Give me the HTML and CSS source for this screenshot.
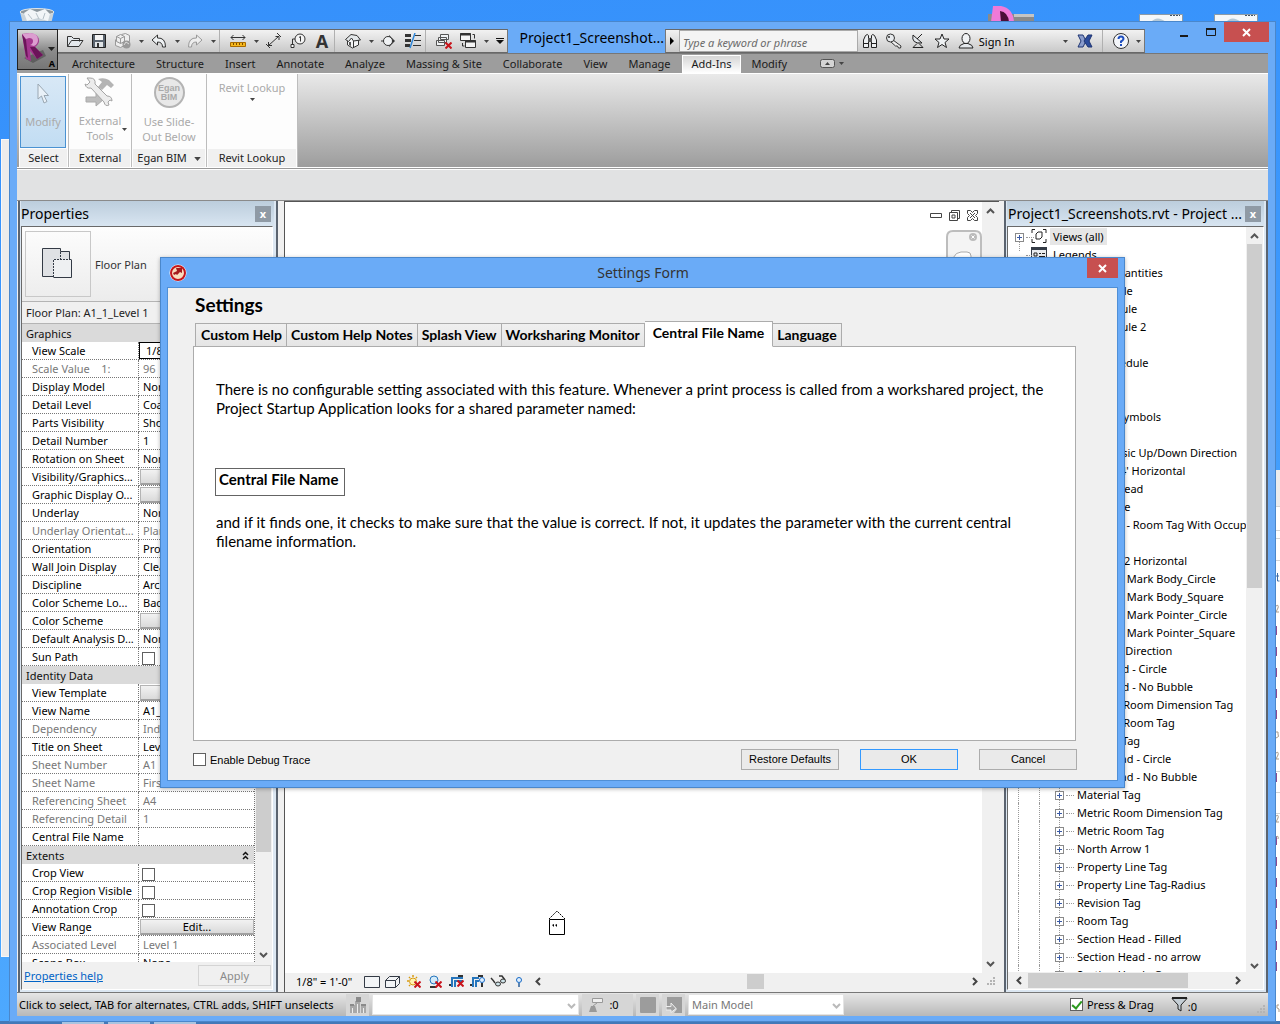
FILE: index.html
```html
<!DOCTYPE html>
<html lang="en">
<head>
  <meta charset="UTF-8">
  <title>Project1_Screenshots.rvt</title>
  <link rel="stylesheet" href="styles.css">
</head>
<body>

  <!-- shared shapes -->
  <svg class="defs" width="0" height="0">
    <symbol id="caret" viewBox="0 0 5 3"><path d="M0 0h5L2.500 3z" fill="#444"/></symbol>
    <symbol id="up" viewBox="0 0 9 6"><path d="M1 5l3.500-3.500L8 5" fill="none" stroke="#555" stroke-width="2"/></symbol>
    <symbol id="down" viewBox="0 0 9 6"><path d="M1 1l3.500 3.500L8 1" fill="none" stroke="#555" stroke-width="2"/></symbol>
    <symbol id="left" viewBox="0 0 6 9"><path d="M5 1L1.500 4.500 5 8" fill="none" stroke="#444" stroke-width="2"/></symbol>
    <symbol id="right" viewBox="0 0 6 9"><path d="M1 1l3.500 3.500L1 8" fill="none" stroke="#444" stroke-width="2"/></symbol>
    <symbol id="cross" viewBox="0 0 9 9"><path d="M1 1l7 7M8 1L1 8" fill="none" stroke="#fff" stroke-width="2"/></symbol>
    <symbol id="redx" viewBox="0 0 7 7"><path d="M0.500 0.500l6 6M6.500 0.500l-6 6" fill="none" stroke="#c8141c" stroke-width="2"/></symbol>
    <symbol id="grip" viewBox="0 0 9 9"><path d="M6 0h2v2H6zM3 3h2v2H3zM6 3h2v2H6zM0 6h2v2H0zM3 6h2v2H3zM6 6h2v2H6z" fill="#b4b4b4"/></symbol>
  </svg>

  <!-- desktop behind the windows -->
  <div class="desk-icons">
    <svg class="bin" width="38" height="24" viewBox="0 0 38 24"><path d="M2 4l5 20h24l5-20z" fill="#c9d3da"/><ellipse cx="19" cy="4" rx="17" ry="3.500" fill="#8d979d" stroke="#dfe6ea"/><path d="M6 5l6-4 7 3 8-3 5 5-2 7-10-3-11 3z" fill="#f2f5f7"/><path d="M10 6l4 5M18 5l3 6M27 5l-2 6" stroke="#b4bfc6"/></svg>
    <svg class="revit" width="48" height="16" viewBox="0 0 48 16"><path d="M0 8h46v8H0z" fill="#8a8a8a"/><path d="M26 8h20v3H26z" fill="#c4c4c4"/><path d="M5 0h8q12 2 13 16H3z" fill="#f07ad8"/><path d="M12 5q8 1 9 11h-8z" fill="#4b0f38"/></svg>
    <svg class="file" width="44" height="8" viewBox="0 0 44 8"><path d="M0.500 0.500h43V8H.5z" fill="#f4f7f9" stroke="#8c9aa5"/><path d="M12 8q6-7 15 0" fill="#b4c8d6"/><path d="M31 1.500h10" stroke="#456" stroke-dasharray="2 1"/></svg>
    <svg class="file" width="44" height="8" viewBox="0 0 44 8"><path d="M0.500 0.500h43V8H.5z" fill="#f4f7f9" stroke="#8c9aa5"/><path d="M12 8q6-7 15 0" fill="#b4c8d6"/><path d="M31 1.500h10" stroke="#456" stroke-dasharray="2 1"/></svg>
  </div>
  <div class="behind-left"></div>
  <div class="behind-right">
    <svg width="4" height="550" viewBox="0 0 4 550">
      <path d="M0 .5h4M0 24.500h4M0 32.500h4M0 54.500h4M0 265.500h4M0 286.500h4M0 307.500h4" stroke="#d4d4d4"/>
      <path d="M0.500 120v9M.5 141v9M.5 162v9M.5 183v9M.5 204v9M.5 267v9M.5 330v9M.5 351v9M.5 372v9M.5 393v9M.5 414v9M.5 435v9M.5 456v9" stroke="#8a4b94"/>
      <path d="M0 70h3M1.500 67v8h2" fill="none" stroke="#3f6ea8"/>
      <path d="M0 100q3-2 2 2l-2 4h3M0 226q3-1 2 2 2 3-2 4M0 247q3-2 2 2l-2 4h3M0 310q3-2 2 2l-2 4h3M0 331q3-2 2 2M3 499h-2v3q3 0 2 4" fill="none" stroke="#a99a88"/>
    </svg>
  </div>
  <div class="taskbar"><span></span><span></span><span></span></div>

  <div class="window main-window">
    <header class="titlebar">
      <button class="app-btn" aria-label="Application menu">
        <svg width="40" height="40" viewBox="0 0 40 40">
          <path d="M6 28l9 5 13-7-3-6z" fill="#3d3d3d" opacity=".5"/>
          <path d="M4 4l8-1q9 1 9 8 0 3-4 6l8 8-6 4-7-8 1 10-5-2z" fill="#a4368f"/>
          <path d="M4 4l8-1q8 0 8 7 0 4-4 6l-4-1q3-1 3-4 0-3-4-3l-3 1z" fill="#dc9dd0"/>
          <path d="M12 17l7 12 6-4-8-8zM4 4l4 22 2 2-2-18z" fill="#6b1459"/>
          <path d="M30 17h7l-3.500 4z" fill="#222"/>
        </svg>
        <span>A</span>
      </button>
      <nav class="qat">
        <button aria-label="Open"><svg width="18" height="16" viewBox="0 0 18 16"><path d="M1.500 13.500v-10h4l2 2h6v3M1.500 13.500l4-6H17l-4 6z" fill="#e4e8ec" stroke="#333"/></svg></button>
        <button aria-label="Save"><svg width="16" height="16" viewBox="0 0 16 16"><path d="M1.500 1.500h13v13h-13z" fill="#59636e" stroke="#222"/><path d="M4 2h8v5H4z" fill="#f4f4f4"/><path d="M4 9h8v5H4z" fill="#dfe3e6"/><path d="M6 10h2v4H6z" fill="#333"/></svg></button>
        <button aria-label="Synchronize"><svg width="18" height="18" viewBox="0 0 18 18"><path d="M2.500 4.500l4-2 4 2v5l-4 2-4-2zM7.500 2.500l4-1 4 2v6l-4 2M1.500 7.500v6l5 2 4-2" fill="#eee" stroke="#999"/><path d="M2.500 4.500l4 2 4-2M6.500 6.500v5" fill="none" stroke="#999"/><circle cx="12.500" cy="12.500" r="4" fill="#999"/><path d="M10 13l2-3 3 2" fill="none" stroke="#ddd"/></svg></button>
        <button class="drop" aria-label="Synchronize options"><svg width="5" height="3"><use href="#caret"/></svg></button>
        <button aria-label="Undo"><svg width="16" height="14" viewBox="0 0 16 14"><path d="M1 6l5.500-5v3q8-.500 8 9h-3q0-5-5-5v3z" fill="#eef1f3" stroke="#333"/></svg></button>
        <button class="drop" aria-label="Undo list"><svg width="5" height="3"><use href="#caret"/></svg></button>
        <button aria-label="Redo"><svg width="16" height="14" viewBox="0 0 16 14"><path d="M15 6L9.500 1v3q-8-.500-8 9h3q0-5 5-5v3z" fill="#eee" stroke="#999"/></svg></button>
        <button class="drop" aria-label="Redo list"><svg width="5" height="3"><use href="#caret"/></svg></button>
        <i></i>
        <button aria-label="Measure"><svg width="16" height="14" viewBox="0 0 16 14"><path d="M1 3.500h14M3.500 1L1 3.500 3.500 6M12.500 1L15 3.500 12.500 6" fill="none" stroke="#333"/><path d="M.5 8.500h15v4H.5z" fill="#f6b81e" stroke="#a86b00"/><path d="M3.500 9v2M6.500 9v2M9.500 9v2M12.500 9v2" stroke="#7a4b00"/></svg></button>
        <button class="drop" aria-label="Measure options"><svg width="5" height="3"><use href="#caret"/></svg></button>
        <button aria-label="Aligned dimension"><svg width="18" height="16" viewBox="0 0 18 16"><path d="M3.500 12.500l10-9M3.500 9v3.500H7M10.500 3.500H14V7M1 11l4 4M12 0l4 4" fill="none" stroke="#333"/></svg></button>
        <button aria-label="Tag"><svg width="16" height="16" viewBox="0 0 16 16"><circle cx="10" cy="6" r="5" fill="#f4f4f4" stroke="#333"/><path d="M9 4.500l1.500-1v5M5 6H2.500v6" fill="none" stroke="#333"/><path d="M1 11.500h3v3H1z" fill="#fff" stroke="#333"/></svg></button>
        <button class="text-tool" aria-label="Text">A</button>
        <i></i>
        <button aria-label="Default 3D view"><svg width="16" height="16" viewBox="0 0 16 16"><path d="M2.500 6v6l5 3 6-3V6" fill="#f4f5f6" stroke="#333"/><path d="M.5 6.500L6 1.500l6 1 3.500 4.500-7 1-2-3-3 3.500z" fill="#e4e8ea" stroke="#333"/><path d="M8.500 8v6" stroke="#333"/><path d="M4 9h2v4l-2-1z" fill="#555"/></svg></button>
        <button class="drop" aria-label="3D options"><svg width="5" height="3"><use href="#caret"/></svg></button>
        <button aria-label="Section"><svg width="16" height="14" viewBox="0 0 16 14"><path d="M8 1l6 6-6 6z" fill="#333"/><circle cx="7" cy="7" r="4.500" fill="#f0f2f4" stroke="#333"/><path d="M0 7h3" stroke="#333"/></svg></button>
        <button aria-label="Thin lines"><svg width="18" height="16" viewBox="0 0 18 16"><path d="M1 2.500h6M1 7.500h6M1 12.500h5" stroke="#333" stroke-width="3"/><path d="M11 2.500h6M10 7.500h7M9 12.500h8" stroke="#333"/><path d="M11 0L6 15" stroke="#2f86d8" stroke-width="1.500"/></svg></button>
        <i></i>
        <button aria-label="Close hidden windows"><svg width="16" height="16" viewBox="0 0 16 16"><path d="M4.500 1.500h8v5h-8zM2.500 4.500h8v5h-8zM.5 7.500h8v5h-8z" fill="#f0f2f4" stroke="#555"/><use href="#redx" x="9" y="9" width="7" height="7"/></svg></button>
        <button aria-label="Switch windows"><svg width="18" height="18" viewBox="0 0 18 18"><path d="M1.500 1.500h10v7h-10zM6.500 8.500h10v7h-10z" fill="#f4f4f4" stroke="#333"/><path d="M1 2.500h11M6 9.500h11" stroke="#333" stroke-width="2"/><path d="M13.500 2.500h2v4M3.500 11v3h2" fill="none" stroke="#333"/></svg></button>
        <button class="drop" aria-label="Window list"><svg width="5" height="3"><use href="#caret"/></svg></button>
        <button class="drop more" aria-label="Customize toolbar"><svg width="8" height="6" viewBox="0 0 8 6"><path d="M0 0h8v1H0zM0 2h8L4 6z" fill="#111"/></svg></button>
      </nav>
      <span class="doc-title">Project1_Screenshot...</span>
      <div class="infocenter">
        <button class="expand" aria-label="Collapse search"><svg width="4" height="8" viewBox="0 0 4 8"><path d="M0 0l4 4-4 4z" fill="#000"/></svg></button>
        <input type="text" aria-label="Search" placeholder="Type a keyword or phrase">
        <button aria-label="Search"><svg width="16" height="16" viewBox="0 0 16 16"><path d="M3.500 2.500q2-2 3 0v12h-5V7zM12.500 2.500q-2-2-3 0v12h5V7z" fill="#eef0f2" stroke="#222"/><path d="M6 5h4v4H6z" fill="#555"/><path d="M1.500 10.500h5M9.500 10.500h5" stroke="#222"/></svg></button>
        <button aria-label="Subscription"><svg width="18" height="16" viewBox="0 0 18 16"><path d="M8 7l8 6-.500 2h-2l-1-2-2 0-5-4.500" fill="#eee" stroke="#333"/><circle cx="5.500" cy="5" r="4" fill="#e8ebee" stroke="#333"/><circle cx="4" cy="4" r="1" fill="#333"/></svg></button>
        <button aria-label="Communication"><svg width="16" height="16" viewBox="0 0 16 16"><path d="M3 2q-2 9 9 8z" fill="#e4e8ec" stroke="#222"/><path d="M7 6l5-5M7 10.500l-4 4h10l-4-4" fill="none" stroke="#222"/></svg></button>
        <button aria-label="Favorites"><svg width="16" height="16" viewBox="0 0 16 16"><path d="M8 1l2 5h5l-4 3.500 1.500 5L8 11.500l-4.500 3 1.500-5L1 6h5z" fill="#eef1f3" stroke="#222"/></svg></button>
        <button class="sign-in"><svg width="16" height="16" viewBox="0 0 16 16"><path d="M1 15q0-3 5-4.500h4q5 1.500 5 4.500z" fill="#e4e8ec" stroke="#222"/><ellipse cx="8" cy="5.500" rx="4" ry="5" fill="#f0f2f4" stroke="#222"/></svg>Sign In<svg class="end" width="5" height="3"><use href="#caret"/></svg></button>
        <button aria-label="Exchange apps"><svg width="16" height="14" viewBox="0 0 16 14"><path d="M1 1h5l3 6-3 6H1l3-6z" fill="#8a9ccc" stroke="#1f3572"/><path d="M15 1h-4L7 7l4 6h4l-3-6z" fill="#2c4c9c" stroke="#1f3572"/></svg></button>
        <i></i>
        <button aria-label="Help"><svg width="18" height="18" viewBox="0 0 18 18"><circle cx="9" cy="9" r="7.500" fill="#f4f6fa" stroke="#333"/><path d="M6.500 7q0-2.500 2.500-2.500T11.500 7Q11 8.500 9 9.500V11M9 12v2" fill="none" stroke="#1f4fbf" stroke-width="2"/></svg></button>
        <button class="drop" aria-label="Help options"><svg width="5" height="3"><use href="#caret"/></svg></button>
      </div>
      <div class="win-btns">
        <button aria-label="Minimize"><svg width="10" height="12" viewBox="0 0 10 12"><path d="M1 9h8v2H1z" fill="#1a1a1a"/></svg></button>
        <button aria-label="Maximize"><svg width="10" height="8" viewBox="0 0 10 8"><path d="M0.500 1h9v6.500h-9z" fill="none" stroke="#1a1a1a"/><path d="M0 1h10" stroke="#1a1a1a" stroke-width="2"/></svg></button>
        <button class="close" aria-label="Close"><svg width="9" height="9"><use href="#cross"/></svg></button>
      </div>
    </header>

    <nav class="ribbon-tabs">
      <a href="#">Architecture</a><a href="#">Structure</a><a href="#">Insert</a><a href="#">Annotate</a><a href="#">Analyze</a><a href="#">Massing &amp; Site</a><a href="#">Collaborate</a><a href="#">View</a><a href="#">Manage</a><a href="#" class="active">Add-Ins</a><a href="#">Modify</a>
      <button aria-label="Minimize ribbon"><svg width="24" height="9" viewBox="0 0 24 9"><rect x=".5" y=".5" width="14" height="8" rx="2" fill="#d4d4d4" stroke="#555"/><path d="M5 6l2.500-3L10 6z" fill="#444"/><path d="M19 3h5l-2.500 3z" fill="#444"/></svg></button>
    </nav>

    <div class="ribbon">
      <section class="panel select">
        <button class="tool on"><svg width="14" height="22" viewBox="0 0 14 22"><path d="M2 1v15l3.500-3L8 20l3-1.500-3-6h4.500z" fill="#e9f1f8" stroke="#9aa7b2"/></svg>Modify</button>
        <h3>Select</h3>
      </section>
      <section class="panel external">
        <button class="tool"><svg width="32" height="30" viewBox="0 0 32 30"><path d="M2 20h10v-4l8 6-8 7v-4H2z" fill="#bdbdbd" stroke="#aaa"/><path d="M14 2q6-2 11 1l5 5-3 3-4-3-5 5-4-3 4-5z" fill="#b4b4b4"/><path d="M3 1l3 4-3 3-2-1q1 5 6 4l13 14q1 5 5 3l-1-3 2-2 2 1q0-5-5-5L11 7q1-6-5-6z" fill="#ececec" stroke="#a4a4a4"/></svg><span>External<br>Tools</span><svg class="side" width="5" height="3"><use href="#caret"/></svg></button>
        <h3>External</h3>
      </section>
      <section class="panel egan">
        <button class="tool"><span class="badge">Egan<br>BIM</span><span>Use Slide-<br>Out Below</span></button>
        <h3>Egan BIM <svg width="7" height="4" viewBox="0 0 5 3"><use href="#caret"/></svg></h3>
      </section>
      <section class="panel lookup">
        <button class="tool">Revit Lookup<svg class="below" width="5" height="3"><use href="#caret"/></svg></button>
        <h3>Revit Lookup</h3>
      </section>
    </div>
    <div class="options-bar"></div>

    <main class="workspace">
      <aside class="dock properties">
        <header><h2>Properties</h2><button aria-label="Close properties">x</button></header>
        <div class="dock-body">
          <div class="type-selector">
            <div class="thumb"><svg width="34" height="34" viewBox="0 0 34 34"><path d="M2 2h18v2h9v10h-1v15H2z" fill="#dfe1e4"/><path d="M13.500 29.500h-12v-28h18v3h9v8" fill="none" stroke="#333a45"/><path d="M12.500 12.500h18v18h-18z" fill="#eef0f2" stroke="none"/><path d="M30.500 12.500v18h-18" fill="none" stroke="#333a45"/><path d="M19.500 2v10.500M12.500 30V12.500h18" fill="none" stroke="#333a45" stroke-dasharray="2 1"/></svg></div>
            <span>Floor Plan</span>
          </div>
          <div class="filter">Floor Plan: A1_1_Level 1</div>
          <div class="grid-scroll">
            <div class="grid-clip">
              <table>
                <colgroup><col class="name"><col></colgroup>
                <tr class="group"><th colspan="2">Graphics</th></tr>
                <tr><td>View Scale</td><td><span class="edit">1/8" = 1'-0"</span></td></tr>
                <tr class="off"><td>Scale Value &nbsp;&nbsp; 1:</td><td>96</td></tr>
                <tr><td>Display Model</td><td>Normal</td></tr>
                <tr><td>Detail Level</td><td>Coarse</td></tr>
                <tr><td>Parts Visibility</td><td>Show Original</td></tr>
                <tr><td>Detail Number</td><td>1</td></tr>
                <tr><td>Rotation on Sheet</td><td>None</td></tr>
                <tr><td>Visibility/Graphics...</td><td><button>Edit...</button></td></tr>
                <tr><td>Graphic Display O...</td><td><button>Edit...</button></td></tr>
                <tr><td>Underlay</td><td>None</td></tr>
                <tr class="off"><td>Underlay Orientat...</td><td>Plan</td></tr>
                <tr><td>Orientation</td><td>Project North</td></tr>
                <tr><td>Wall Join Display</td><td>Clean all wall joins</td></tr>
                <tr><td>Discipline</td><td>Architectural</td></tr>
                <tr><td>Color Scheme Lo...</td><td>Background</td></tr>
                <tr><td>Color Scheme</td><td><button>&lt;none&gt;</button></td></tr>
                <tr><td>Default Analysis D...</td><td>None</td></tr>
                <tr><td><label for="sun">Sun Path</label></td><td><input type="checkbox" id="sun"></td></tr>
                <tr class="group"><th colspan="2">Identity Data</th></tr>
                <tr><td>View Template</td><td><button>&lt;None&gt;</button></td></tr>
                <tr><td>View Name</td><td>A1_1_Level 1</td></tr>
                <tr class="off"><td>Dependency</td><td>Independent</td></tr>
                <tr><td>Title on Sheet</td><td>Level 1</td></tr>
                <tr class="off"><td>Sheet Number</td><td>A1</td></tr>
                <tr class="off"><td>Sheet Name</td><td>First Floor</td></tr>
                <tr class="off"><td>Referencing Sheet</td><td>A4</td></tr>
                <tr class="off"><td>Referencing Detail</td><td>1</td></tr>
                <tr><td>Central File Name</td><td></td></tr>
                <tr class="group"><th colspan="2">Extents <svg width="7" height="9" viewBox="0 0 7 9"><path d="M1 4l2.500-2.500L6 4M1 8l2.500-2.500L6 8" fill="none" stroke="#111" stroke-width="1.500"/></svg></th></tr>
                <tr><td><label for="crop">Crop View</label></td><td><input type="checkbox" id="crop"></td></tr>
                <tr><td><label for="cropvis">Crop Region Visible</label></td><td><input type="checkbox" id="cropvis"></td></tr>
                <tr><td><label for="anno">Annotation Crop</label></td><td><input type="checkbox" id="anno"></td></tr>
                <tr><td>View Range</td><td><button>Edit...</button></td></tr>
                <tr class="off"><td>Associated Level</td><td>Level 1</td></tr>
                <tr><td>Scope Box</td><td>None</td></tr>
              </table>
            </div>
            <div class="vscroll"><span></span><svg width="9" height="6"><use href="#down"/></svg></div>
          </div>
          <footer><a href="#">Properties help</a><button disabled>Apply</button></footer>
        </div>
      </aside>

      <section class="view">
        <div class="canvas">
          <div class="sheet">
            <div class="mdi">
              <svg width="12" height="5" viewBox="0 0 12 5"><path d="M.5 .5h11v4H.5z" fill="#fff" stroke="#444"/></svg>
              <svg width="11" height="11" viewBox="0 0 11 11"><path d="M2.500 .5h8v8h-8z" fill="#fff" stroke="#444"/><path d="M.5 2.500h8v8h-8z" fill="#fff" stroke="#444"/><path d="M3 5h3v3H3z" fill="none" stroke="#444"/></svg>
              <svg width="11" height="11" viewBox="0 0 11 11"><path d="M.5 .5h3l2 2 2-2h3v3l-2 2 2 2v3h-3l-2-2-2 2h-3v-3l2-2-2-2z" fill="#fff" stroke="#444"/><path d="M3 3l5 5M8 3L3 8" stroke="#444"/></svg>
            </div>
            <div class="navbar"><svg width="36" height="50" viewBox="0 0 36 50"><path d="M1 50V7q0-6 6-6h22q6 0 6 6v43" fill="#f4f4f4" stroke="#bdbdbd" stroke-width="2"/><circle cx="27" cy="7" r="4" fill="#bbb"/><path d="M25.500 5.500l3 3M28.500 5.500l-3 3" stroke="#fff"/><path d="M7 28q3-6 8-6h6q4 0 4 4v3" fill="#fff" stroke="#aaa"/></svg></div>
            <svg class="elevation" width="18" height="26" viewBox="0 0 18 26"><path d="M1 9l8-8 8 8" fill="none" stroke="#000" stroke-dasharray="2 1"/><path d="M1.500 9.500h15v15h-15z" fill="#fff" stroke="#000"/><path d="M4 15l2-1v3zM7 15l2-1v3z" fill="#000"/></svg>
          </div>
          <div class="vscroll bare"><svg width="9" height="6"><use href="#up"/></svg><svg width="9" height="6"><use href="#down"/></svg></div>
        </div>
        <div class="viewbar">
          <span>1/8" = 1'-0"</span>
          <svg width="17" height="16" viewBox="0 0 17 16"><path d="M.5 2.500h15v11H.5z" fill="#f2f4f6" stroke="#333a45"/></svg>
          <svg width="17" height="16" viewBox="0 0 17 16"><path d="M.5 6.500h10v7H.5zM.5 6.500l4-4h10l-4 4M14.500 2.500v7l-4 4" fill="#f2f4f6" stroke="#333a45"/></svg>
          <svg width="17" height="16" viewBox="0 0 17 16"><circle cx="7" cy="7.500" r="3.500" fill="#fff3b0" stroke="#d89a10"/><path d="M7 1v2M1 7h2M3 3l1 1M11 3l-1 1M3 12l1-1" stroke="#d89a10" stroke-width="1.500"/><use href="#redx" x="8" y="7" width="7" height="7"/></svg>
          <svg width="17" height="16" viewBox="0 0 17 16"><circle cx="7" cy="6" r="4" fill="#d4ebfa" stroke="#2676bd"/><path d="M3 13h6" stroke="#333" stroke-width="2"/><use href="#redx" x="8" y="7" width="7" height="7"/></svg>
          <svg width="17" height="16" viewBox="0 0 17 16"><path d="M4 13V4h11M7 13V7h8" fill="none" stroke="#2676bd" stroke-width="2"/><path d="M1 11h2M10 2h5" stroke="#333" stroke-width="2"/><use href="#redx" x="9" y="6" width="7" height="7"/></svg>
          <svg width="17" height="16" viewBox="0 0 17 16"><path d="M4 13V4h6M7 13V7h3" fill="none" stroke="#2676bd" stroke-width="2"/><path d="M1 11h2M9 2h5" stroke="#333" stroke-width="2"/><circle cx="13" cy="6" r="2.500" fill="#dff0ff" stroke="#1668c4"/><path d="M13 9v4" stroke="#333" stroke-width="2"/></svg>
          <svg width="17" height="16" viewBox="0 0 17 16"><path d="M1 4q2 2 4 5M9 2l3 0 3 4" fill="none" stroke="#333" stroke-width="1.500"/><ellipse cx="8" cy="10" rx="2.500" ry="2" fill="#cfe4ea" stroke="#333"/><ellipse cx="13" cy="7" rx="2.500" ry="2" fill="#cfe4ea" stroke="#333"/></svg>
          <svg width="17" height="16" viewBox="0 0 17 16"><circle cx="8" cy="6" r="2.500" fill="#dff0ff" stroke="#1668c4"/><path d="M8 9v4" stroke="#5a83b0" stroke-width="2"/></svg>
          <div class="hscroll"><svg width="6" height="9"><use href="#left"/></svg><span></span><svg width="6" height="9"><use href="#right"/></svg></div>
          <svg class="corner" width="9" height="9"><use href="#grip"/></svg>
        </div>
      </section>

      <aside class="dock browser">
        <header><h2>Project1_Screenshots.rvt - Project ...</h2><button aria-label="Close browser">x</button></header>
        <div class="dock-body">
          <div class="tree-scroll">
            <ul class="tree">
              <li class="root"><b></b><svg width="16" height="14" viewBox="0 0 16 14"><path d="M1 4V.5h3M12 .5h3V4M1 10v3.500h3M12 13.500h3V10" fill="none" stroke="#222"/><path d="M5 5l2-2h4v5l-2 2H5z" fill="#fff" stroke="#222"/></svg><span class="sel">Views (all)</span></li>
              <li class="root"><b class="none"></b><svg width="16" height="14" viewBox="0 0 16 14"><path d="M.5 .5h15v13H.5z" fill="#e9ecef" stroke="#333a45"/><path d="M0 1.500h16" stroke="#333a45" stroke-width="3"/><path d="M3 6h3v3H3zM8 6.500h2M11 6.500h3M8 9.500h6" fill="none" stroke="#222"/></svg><span>Legends</span></li>
              <li class="root"><b></b><i></i><span>Schedules/Quantities</span></li>
              <li class="sub">Door Schedule</li>
              <li class="sub">Room Schedule</li>
              <li class="sub">Room Schedule 2</li>
              <li class="sub">Sheet List</li>
              <li class="sub">Window Schedule</li>
              <li class="sub">Sheets</li>
              <li class="sub">Families</li>
              <li class="sub">Annotation Symbols</li>
              <li><b></b>Area Tag</li>
              <li><b></b>Areas Basic Up/Down Direction</li>
              <li><b></b>Break 1/4' Horizontal</li>
              <li><b></b>Callout Head</li>
              <li><b></b>Centerline</li>
              <li><b></b>Custom I - Room Tag With Occupancy</li>
              <li><b></b>Door Tag</li>
              <li><b></b>Drawing-2 Horizontal</li>
              <li><b></b>Elevation Mark Body_Circle</li>
              <li><b></b>Elevation Mark Body_Square</li>
              <li><b></b>Elevation Mark Pointer_Circle</li>
              <li><b></b>Elevation Mark Pointer_Square</li>
              <li><b></b>Graphics Direction</li>
              <li><b></b>Grid Head - Circle</li>
              <li><b></b>Grid Head - No Bubble</li>
              <li><b></b>Imperial Room Dimension Tag</li>
              <li><b></b>Imperial Room Tag</li>
              <li><b></b>Keynote Tag</li>
              <li><b></b>Level Head - Circle</li>
              <li><b></b>Level Head - No Bubble</li>
              <li><b></b>Material Tag</li>
              <li><b></b>Metric Room Dimension Tag</li>
              <li><b></b>Metric Room Tag</li>
              <li><b></b>North Arrow 1</li>
              <li><b></b>Property Line Tag</li>
              <li><b></b>Property Line Tag-Radius</li>
              <li><b></b>Revision Tag</li>
              <li><b></b>Room Tag</li>
              <li><b></b>Section Head - Filled</li>
              <li><b></b>Section Head - no arrow</li>
              <li><b></b>Section Head - Open</li>
            </ul>
            <div class="vscroll"><svg width="9" height="6"><use href="#up"/></svg><span></span><svg width="9" height="6"><use href="#down"/></svg></div>
          </div>
          <div class="hscroll"><svg width="6" height="9"><use href="#left"/></svg><span></span><svg width="6" height="9"><use href="#right"/></svg></div>
        </div>
      </aside>
    </main>

    <footer class="statusbar">
      <p>Click to select, TAB for alternates, CTRL adds, SHIFT unselects</p>
      <span class="cell icon"><svg width="18" height="18" viewBox="0 0 18 18"><path d="M1 9h5v8H1zM6 5h5v12H6zM12 9h5v8h-5z" fill="#a8a8a8"/><path d="M7 1h5v5H7zM1 8h4v2H1zM12 8h5v2h-5z" fill="#8a8a8a"/><path d="M3.500 12v5M8.500 8v9M14.500 12v5" stroke="#eee"/></svg></span>
      <span class="combo wide"><select aria-label="Worksets"><option></option></select><svg width="9" height="6"><use href="#down"/></svg></span>
      <span class="cell count"><svg width="16" height="16" viewBox="0 0 16 16"><path d="M4.500 1.500h10v4h-10zM9 6l-4 3" fill="#eee" stroke="#999"/><path d="M1 15l2-6h4l2 6z" fill="#999"/></svg>:0</span>
      <span class="cell icon"><svg width="16" height="16" viewBox="0 0 16 16"><rect width="16" height="16" rx="1" fill="#9c9c9c"/></svg></span>
      <span class="cell icon"><svg width="16" height="16" viewBox="0 0 16 16"><path d="M1 0h15v16H8l3-4-5-5v3H1z" fill="#9c9c9c"/><path d="M0 9.500h5V6l5 5.500-5 4V13H0z" fill="#a4a4a4" stroke="#eee"/></svg></span>
      <span class="combo"><select aria-label="Design option"><option>Main Model</option></select><svg width="9" height="6"><use href="#down"/></svg></span>
      <div class="status-right">
        <label><input type="checkbox" checked>Press &amp; Drag</label>
        <span class="filter-count"><svg width="17" height="16" viewBox="0 0 17 16"><path d="M1 1.500h15L10 8v6l-3-2V8z" fill="#c5ced5" stroke="#222"/><path d="M1 1h15" stroke="#222" stroke-width="2"/></svg><span>:0</span></span>
        <svg class="corner" width="9" height="9"><use href="#grip"/></svg>
      </div>
    </footer>
  </div>

  <div class="window dialog" role="dialog" aria-label="Settings Form">
    <header class="dialog-title">
      <svg width="18" height="18" viewBox="0 0 18 18"><circle cx="9" cy="9" r="8.500" fill="#fff"/><circle cx="9" cy="9" r="7" fill="#f9dcbc" stroke="#c4161c" stroke-width="2"/><path d="M7 4h6v5l-2-1-3 3-1-1-2 1-1-2 4-2z" fill="#a51a1c"/></svg>
      <span>Settings Form</span>
      <button class="close" aria-label="Close"><svg width="9" height="9"><use href="#cross"/></svg></button>
    </header>
    <form class="dialog-body">
      <h1>Settings</h1>
      <div class="tabs" role="tablist">
        <button type="button" role="tab">Custom Help</button><button type="button" role="tab">Custom Help Notes</button><button type="button" role="tab">Splash View</button><button type="button" role="tab">Worksharing Monitor</button><button type="button" role="tab" class="active">Central File Name</button><button type="button" role="tab">Language</button>
      </div>
      <div class="tab-page">
        <p>There is no configurable setting associated with this feature. Whenever a print process is called from a workshared project, the<br>Project Startup Application looks for a shared parameter named:</p>
        <input type="text" aria-label="Parameter name" value="Central File Name" readonly>
        <p>and if it finds one, it checks to make sure that the value is correct. If not, it updates the parameter with the current central<br>filename information.</p>
      </div>
      <div class="dialog-foot">
        <label><input type="checkbox">Enable Debug Trace</label>
        <button type="button">Restore Defaults</button>
        <button type="button" class="default">OK</button>
        <button type="button">Cancel</button>
      </div>
    </form>
  </div>

</body>
</html>
```
FILE: styles.css
```css
* { box-sizing: border-box; }
body {
  margin: 0;
  height: 100vh;
  overflow: hidden;
  position: relative;
  background: linear-gradient(170deg, #3590fb, #3c98fd 40%, #55b0ff);
  font-family: "Noto Sans", "Open Sans", sans-serif;
  font-size: 11px;
  color: #000;
}
button, input, select {
  font: inherit;
  color: inherit;
  margin: 0;
  padding: 0;
}
button { border: none; background: none; }
h1, h2, h3, p, ul { margin: 0; padding: 0; font-weight: normal; }
svg { display: block; flex: none; }
.defs { position: absolute; }
input[type="checkbox"] {
  appearance: none;
  width: 13px;
  height: 13px;
  background: #fff;
  border: 1px solid #606060;
  flex: none;
}

/* desktop */
.desk-icons {
  display: flex;
  align-items: flex-end;
  height: 22px;
  overflow: hidden;
  padding: 0 22px 0 18px;
}
.desk-icons .bin { margin-bottom: -10px; margin-right: auto; }
.desk-icons .revit { margin-right: 103px; }
.desk-icons .file + .file { margin-left: 31px; }
.behind-left, .behind-right {
  position: absolute;
  background: #ececec;
}
.behind-left { left: 1px; width: 10px; top: 139px; bottom: 67px; border: 1px solid #f8f8f8; }
.behind-right { right: 0; width: 4px; top: 470px; bottom: 2px; background: #fff; border-top: 36px solid #ececec; }
.taskbar {
  position: absolute;
  left: 0;
  right: 0;
  bottom: 0;
  height: 3px;
  padding: 1px 0 0 62px;
  display: flex;
  gap: 4px;
  background: #4379b8;
}
.taskbar span { width: 42px; background: #a9c4e0; }

.window {
  position: absolute;
  background: #6aabf7;
  border: 1px solid #4a87cb;
}
.main-window {
  left: 9px;
  right: 4px;
  top: 21px;
  bottom: 2px;
  padding: 0 7px 5px;
  display: flex;
  flex-direction: column;
}

/* title bar */
.titlebar {
  height: 31px;
  flex: none;
  display: flex;
  align-items: flex-end;
  position: relative;
}
.app-btn {
  position: absolute;
  left: 0;
  top: 7px;
  width: 41px;
  height: 41px;
  border: 1px solid #222;
  background: linear-gradient(#d8d8d8, #8c8c8c 50%, #767676);
  z-index: 2;
}
.app-btn span {
  position: absolute;
  right: 2px;
  bottom: 0;
  font-size: 9px;
  font-weight: bold;
  line-height: 10px;
}
.qat, .infocenter {
  height: 24px;
  display: flex;
  align-items: center;
  background: linear-gradient(#f2f2f2, #c9c9c9);
  border-top: 1px solid #686868;
  border-bottom: 1px solid #686868;
}
.qat { margin-left: 41px; padding-left: 5px; border-right: 1px solid #777; }
.qat button, .infocenter button {
  width: 24px;
  height: 22px;
  display: flex;
  align-items: center;
  justify-content: center;
}
.qat .drop { width: 12px; }
.qat .more { width: 15px; }
.qat i, .infocenter i {
  width: 7px;
  height: 22px;
  border-left: 1px solid #b0b0b0;
}
.qat .text-tool { font-size: 18px; font-weight: bold; color: #333; }
.doc-title {
  flex: 1;
  text-align: right;
  padding-right: 1px;
  font-size: 14px;
  line-height: 30px;
  white-space: nowrap;
}
.infocenter { width: 480px; border-left: 1px solid #777; border-right: 1px solid #777; }
.infocenter .expand { width: 13px; }
.infocenter input {
  width: 180px;
  height: 22px;
  padding: 2px 0 0 3px;
  border: 1px solid #aaa;
  background: #f4f4f4;
}
.infocenter input::placeholder { color: #6a6a6a; font-style: italic; opacity: 1; }
.infocenter .sign-in { width: 120px; justify-content: flex-start; gap: 5px; padding-left: 4px; }
.infocenter .sign-in .end { margin-left: auto; margin-right: 5px; }
.infocenter .drop { width: 11px; }
.infocenter i { margin-left: 5px; }
.win-btns { align-self: flex-start; width: 124px; margin-right: -1px; display: flex; justify-content: flex-end; }
.win-btns button { width: 27px; height: 20px; display: flex; align-items: center; justify-content: center; }
.close { background: #c75050; }
.win-btns .close { width: 45px; }

/* ribbon */
.ribbon-tabs {
  height: 20px;
  flex: none;
  display: flex;
  align-items: flex-end;
  padding-left: 45px;
  background: #9d9d9d;
  border-top: 1px solid #777;
}
.ribbon-tabs a {
  padding: 0 11px 0 10px;
  line-height: 17px;
  height: 18px;
  color: #1a1a1a;
  text-decoration: none;
}
.ribbon-tabs .active { background: linear-gradient(#d6d6d6, #fff); border: 1px solid #fff; border-bottom: none; padding: 0 9px; line-height: 16px; }
.ribbon-tabs button { margin: 0 0 5px 22px; }
.ribbon {
  height: 95px;
  flex: none;
  display: flex;
  padding-left: 2px;
  background: linear-gradient(#e9e9e9, #9d9d9d);
  border-top: 1px solid #fff;
  border-bottom: 1px solid #fff;
}
.panel {
  display: flex;
  flex-direction: column;
  background: #fdfdfd;
  border-right: 1px solid #bdbdbd;
  padding: 0 1px;
}
.panel.select { width: 50px; }
.panel.external { width: 63px; }
.panel.egan { width: 75px; }
.panel.lookup { width: 91px; }
.panel h3 {
  height: 18px;
  line-height: 17px;
  font-size: 11px;
  text-align: center;
  background: #f0f0f0;
  color: #222;
}
.panel h3 svg { display: inline-block; margin-left: 4px; vertical-align: 1px; }
.tool {
  flex: 1;
  display: flex;
  flex-direction: column;
  align-items: center;
  position: relative;
  line-height: 15px;
  color: #aaa;
  padding-top: 3px;
}
.tool > svg { margin-bottom: 6px; }
.tool.on {
  border: 1px solid #4a92d2;
  background: linear-gradient(#d8e8f6, #c2ddf3);
  margin: 2px 1px 1px 0;
  padding-top: 6px;
}
.tool.on > svg { margin-bottom: 9px; }
.tool .side { position: absolute; right: 3px; top: 54px; margin: 0; }
.tool .below { margin-top: 3px; }
.panel.lookup .tool { padding-top: 6px; }
.badge {
  width: 31px;
  height: 31px;
  border-radius: 50%;
  border: 2px solid #b4b4b4;
  background: #e8e8e8;
  font: bold 9px "Liberation Sans", sans-serif;
  line-height: 9px;
  padding-top: 5px;
  margin-bottom: 6px;
}
.options-bar {
  height: 33px;
  flex: none;
  background: #e1e2e3;
  border-top: 1px solid #999;
  border-bottom: 1px solid #8a8a8a;
  box-shadow: inset 0 1px #fff;
}

/* docked panes */
.workspace {
  flex: 1;
  min-height: 0;
  display: grid;
  grid-template-columns: 262px 1fr 264px;
  gap: 5px;
  background: #f0f0f0;
}
.dock {
  min-height: 0;
  display: flex;
  flex-direction: column;
  border-left: 2px solid #5b6470;
  border-right: 2px solid #5b6470;
  padding: 0 2px 2px 1px;
  background: #dce7f2;
}
.dock > header {
  height: 25px;
  flex: none;
  display: flex;
  align-items: center;
  background: linear-gradient(#bccddc, #d8e5f1);
}
.dock h2 { flex: 1; font-size: 14px; line-height: 24px; padding-top: 1px; white-space: nowrap; }
.dock > header button {
  width: 16px;
  height: 16px;
  margin-right: 3px;
  background: #8f9aa5;
  color: #fff;
  font-size: 11px;
  font-weight: bold;
  line-height: 12px;
}
.dock-body {
  flex: 1;
  min-height: 0;
  display: flex;
  flex-direction: column;
  border: 1px solid #696969;
  border-right-color: #fff;
  border-bottom-color: #fff;
  background: #f0f0f0;
}
.properties { margin: 0 1px; }
.properties .dock-body { margin-right: 1px; }
.type-selector {
  height: 74px;
  flex: none;
  display: flex;
  align-items: center;
  gap: 4px;
  padding-left: 3px;
  background: linear-gradient(#fdfdfd, #ececec);
  color: #333;
}
.thumb {
  width: 66px;
  height: 66px;
  border: 1px solid #c8c8c8;
  display: flex;
  align-items: center;
  justify-content: center;
}
.filter {
  height: 23px;
  flex: none;
  line-height: 21px;
  padding-left: 4px;
  color: #222;
  border-top: 1px solid #b4b4b4;
  border-bottom: 1px solid #b4b4b4;
}
.grid-scroll { flex: 1; min-height: 0; display: flex; }
.grid-clip { flex: 1; overflow: hidden; background: #fff; border-right: 1px dotted #777; }
table { width: 100%; border-spacing: 0; table-layout: fixed; }
.name { width: 117px; }
td, th {
  height: 18px;
  padding: 0;
  line-height: 16px;
  font-weight: normal;
  text-align: left;
  white-space: nowrap;
  overflow: hidden;
}
th { background: #dadada; padding: 1px 5px 0 4px; color: #111; line-height: 17px; }
th svg { float: right; margin-top: 4px; }
td { border-bottom: 1px dotted #777; padding-left: 10px; }
td:first-child { border-right: 1px dotted #777; }
td + td { padding-left: 4px; }
.off { color: #787878; }
td .edit { display: block; height: 17px; line-height: 15px; margin-left: -4px; padding-left: 6px; border: 1px solid #000; }
td button {
  display: block;
  width: 114px;
  height: 16px;
  line-height: 14px;
  margin: 1px 0 0 -3px;
  background: linear-gradient(#f2f2f2, #dadada);
  border: 1px solid #b4b4b4;
  border-bottom: 2px solid #a0a0a0;
}
td input[type="checkbox"] { display: block; margin: 3px 0 0 -1px; }
.properties footer {
  height: 27px;
  flex: none;
  display: flex;
  justify-content: space-between;
  align-items: center;
  padding: 0 1px 0 2px;
}
.properties footer a { color: #0063c6; padding-bottom: 1px; }
.properties footer button { width: 73px; height: 21px; border: 1px solid #d4d4d4; color: #8a8a8a; }

.vscroll, .hscroll {
  background: #f0f0f0;
  display: flex;
  align-items: center;
  flex: none;
}
.vscroll { width: 17px; flex-direction: column; justify-content: flex-end; padding: 6px 0; }
.vscroll span { width: 15px; background: #cdcdcd; }
.hscroll span { height: 15px; background: #cdcdcd; }
.bare { justify-content: space-between; }
.properties .vscroll { padding-bottom: 4px; }
.properties .vscroll span { height: 528px; margin-bottom: auto; margin-top: -6px; }
.browser .vscroll { padding-bottom: 3px; }
.browser .vscroll span { height: 344px; margin-top: 5px; margin-bottom: auto; }

/* drawing view */
.view {
  min-width: 0;
  display: flex;
  flex-direction: column;
  border-left: 1px solid #555;
  background: #f0f0f0;
  padding-bottom: 2px;
}
.canvas { flex: 1; display: flex; min-height: 0; border-top: 1px solid #555; }
.sheet { flex: 1; background: #fff; position: relative; }
.mdi {
  display: flex;
  justify-content: flex-end;
  align-items: center;
  gap: 7px;
  padding: 8px 4px 0 0;
}
.navbar { position: absolute; right: 0; top: 28px; }
.elevation { position: absolute; left: 263px; bottom: 37px; }
.viewbar {
  height: 17px;
  flex: none;
  display: flex;
  align-items: center;
  gap: 4px;
  padding-left: 11px;
}
.viewbar > span { width: 64px; white-space: nowrap; }
.viewbar .hscroll { flex: 1; padding: 0 5px 0 3px; }
.viewbar .hscroll span { width: 17px; margin: 0 auto 0 206px; }
.viewbar .corner { margin-right: 3px; }

/* project browser */
.browser > header { padding-left: 1px; }
.tree-scroll { flex: 1; min-height: 0; display: flex; }
.tree {
  flex: 1;
  overflow: hidden;
  list-style: none;
  background: #fff;
}
.tree li {
  height: 18px;
  line-height: 17px;
  display: flex;
  align-items: center;
  white-space: nowrap;
  margin-left: 10px;
  padding-left: 20px;
  border-left: 1px dotted #999;
}
.tree li::before {
  content: "";
  width: 15px;
  height: 18px;
  flex: none;
  border-right: 1px dotted #999;
  margin-left: -15px;
  margin-right: 15px;
}
.tree li.root { padding-left: 0; margin-left: 7px; border: none; }
.tree .root::before { display: none; }
.tree .sub { padding-left: 22px; }
.tree b {
  width: 9px;
  height: 9px;
  flex: none;
  margin-top: 2px;
  margin-right: 13px;
  border: 1px solid #8a8a8a;
  background: linear-gradient(#3b5ba5, #3b5ba5) center/5px 1px no-repeat, linear-gradient(#3b5ba5, #3b5ba5) center/1px 5px no-repeat, #fff;
  position: relative;
}
.tree b::after {
  content: "";
  position: absolute;
  left: 10px;
  top: 3px;
  width: 8px;
  border-top: 1px dotted #999;
}
.tree b::before {
  content: "";
  position: absolute;
  left: 3px;
  top: 8px;
  height: 9px;
  border-left: 1px dotted #999;
}
.tree .root b { margin-right: 7px; }
.tree .none { border-color: transparent; background: none; }
.tree .root i { width: 16px; }
.tree .root span { margin-left: 3px; padding: 0 3px; }
.tree .sel { background: #e6e6e6; }
.browser .hscroll { height: 17px; padding: 0 22px 0 8px; }
.browser .hscroll span { width: 160px; margin: 0 auto 0 6px; }

/* status bar */
.statusbar {
  height: 24px;
  flex: none;
  display: flex;
  align-items: center;
  gap: 3px;
  padding: 0 2px;
  border-top: 1px solid #777;
  background: linear-gradient(#e6e6e6, #b8b8b8);
}
.statusbar p { width: 324px; white-space: nowrap; }
.cell {
  height: 22px;
  display: flex;
  align-items: center;
  justify-content: center;
  gap: 5px;
  background: #d6d6d6;
}
.cell.icon { width: 23px; }
.cell.count { width: 51px; padding-right: 8px; }
.combo { position: relative; width: 156px; height: 21px; }
.combo.wide { width: 207px; }
.combo select {
  appearance: none;
  width: 100%;
  height: 100%;
  padding-left: 3px;
  border: 1px solid #e4e4e4;
  border-radius: 0;
  background: #fff;
  color: #777;
}
.combo svg { position: absolute; right: 3px; top: 9px; opacity: .4; }
.status-right { margin-left: auto; display: flex; align-items: center; }
.status-right label { display: flex; align-items: center; gap: 4px; }
.status-right input { position: relative; }
.status-right input:checked::after {
  content: "";
  position: absolute;
  left: 3px;
  top: 0;
  width: 4px;
  height: 8px;
  border: solid #2b9a1e;
  border-width: 0 2px 2px 0;
  transform: rotate(40deg);
}
.filter-count { display: flex; align-items: center; margin: 0 60px 0 17px; }
.filter-count span { padding-top: 4px; }
.status-right .corner { align-self: flex-end; }

/* settings dialog */
.dialog {
  left: 160px;
  right: 155px;
  top: 257px;
  padding: 0 6px 6px;
  box-shadow: 0 1px 4px rgba(0,0,0,0.3);
}
.dialog-title { height: 29px; display: flex; align-items: center; padding-left: 2px; }
.dialog-title span { flex: 1; text-align: center; font-size: 14px; line-height: 26px; color: #333; padding-left: 12px; }
.dialog-title .close {
  width: 31px;
  height: 20px;
  align-self: flex-start;
  display: flex;
  align-items: center;
  justify-content: center;
}
.dialog-body {
  background: #f0f0f0;
  border: 1px solid #4f8fd6;
  padding: 6px 41px 10px 25px;
  font-family: "Liberation Sans", sans-serif;
}
.dialog h1 { font: bold 19px Lato, sans-serif; line-height: 22px; padding-left: 2px; }
.tabs { display: flex; align-items: flex-end; height: 31px; padding-left: 2px; position: relative; }
.tabs button {
  height: 24px;
  padding: 0 4px 2px;
  border: 1px solid #acacac;
  border-left-width: 0;
  background: linear-gradient(#f0f0f0, #e5e5e5);
  font: bold 14px Lato, sans-serif;
}
.tabs button:first-child { border-left-width: 1px; padding-left: 5px; }
.tabs .active { height: 26px; padding: 0 8px 3px; background: #fff; border-bottom-color: #fff; }
.tab-page {
  height: 395px;
  margin-top: -1px;
  padding: 33px 22px;
  background: #fff;
  border: 1px solid #acacac;
  font: 15px Lato, sans-serif;
  line-height: 19px;
}
.tab-page p { white-space: nowrap; }
.tab-page input {
  display: block;
  width: 130px;
  height: 28px;
  margin: 50px 0 17px -1px;
  padding: 0 3px 6px;
  border: 1px solid #646464;
  background: #fff;
  font-weight: bold;
}
.dialog-foot { display: flex; align-items: center; gap: 21px; padding-top: 8px; margin-right: -1px; }
.dialog-foot label { display: flex; align-items: center; gap: 4px; margin-right: auto; }
.dialog-foot button { width: 98px; height: 21px; padding-bottom: 1px; background: #eaeaea; border: 1px solid #acacac; }
.dialog-foot .default { border-color: #3399ff; }
```
